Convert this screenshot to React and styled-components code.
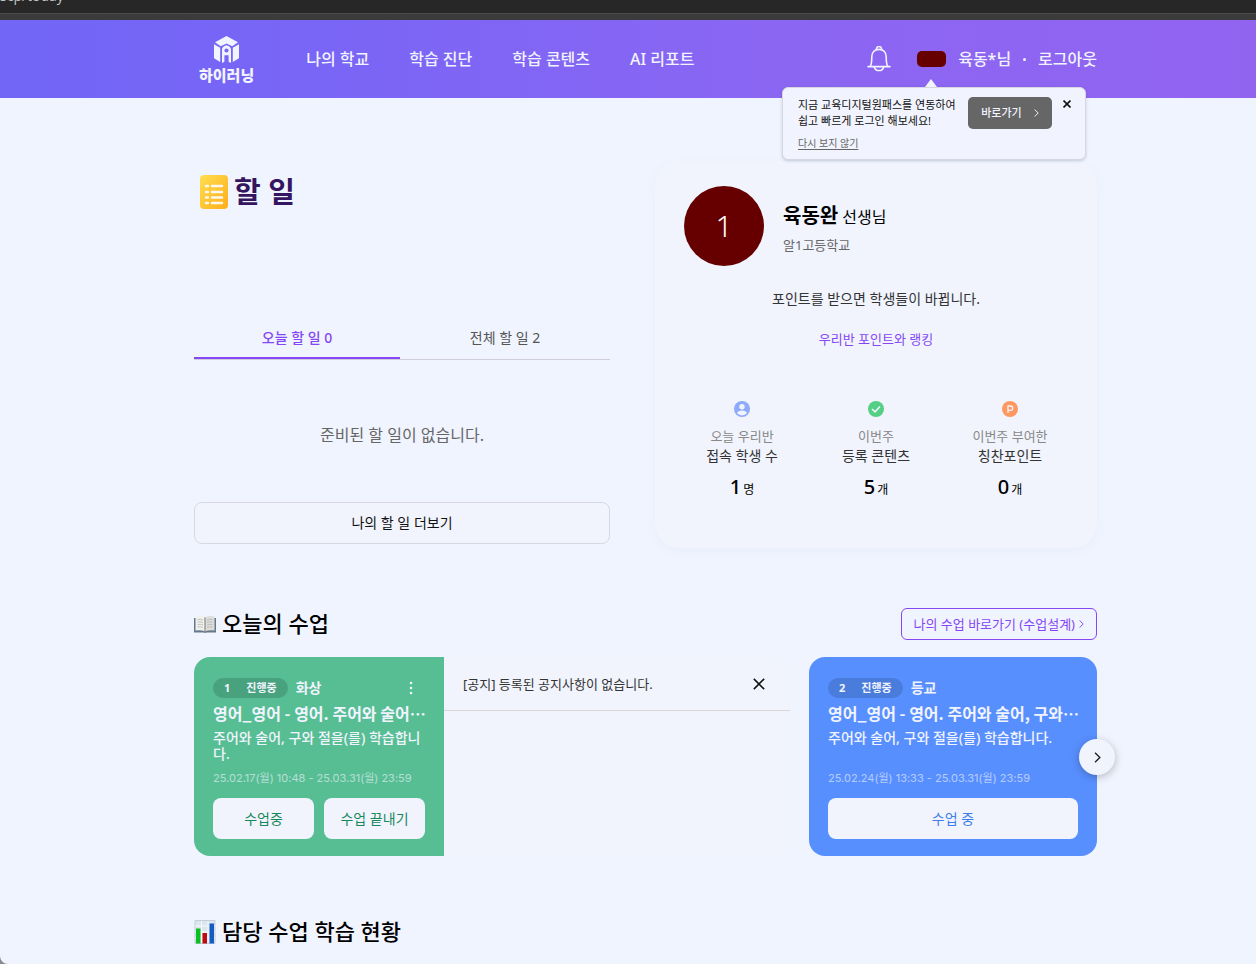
import React from "react";
import styled, { createGlobalStyle } from "styled-components";

const GlobalStyle = createGlobalStyle`
  * {
    box-sizing: border-box;
  }
  body {
    margin: 0;
    background-color: #8a8a8e;
    color: #111;
    font-family: "Noto Sans", "Noto Sans CJK KR", sans-serif;
    font-size: 14px;
    line-height: 20px;
  }
  h1, h2, h3, p, ul {
    margin: 0;
    padding: 0;
  }
  ul {
    list-style: none;
  }
  a {
    color: inherit;
    text-decoration: none;
  }
  button {
    padding: 0;
    border: 0;
    background: none;
    color: inherit;
    font: inherit;
    cursor: pointer;
  }
  svg {
    display: block;
    flex-shrink: 0;
  }
`;

const Page = styled.div`
  min-height: 100vh;
  overflow: hidden;
  border-bottom-left-radius: 8px;
  background-color: #f0f4fe;
`;

const AddressBar = styled.div`
  height: 20px;
  overflow: hidden;
  background: linear-gradient(#272727 13px, #4a4a4a 13px, #4a4a4a 14px, #3b3b3b 14px);
  color: #c4c4c4;
  > p {
    margin-top: -14px;
    font-family: "Open Sans", sans-serif;
    font-size: 14px;
  }
`;

const Header = styled.header`
  padding: 0 159px 0 194px;
  background: linear-gradient(90deg, #7166f6, #7965f6 25%, #8a66f3 60%, #9164f0);
`;

const HeaderInner = styled.div`
  position: relative;
  display: flex;
  align-items: center;
  height: 78px;
  padding-left: 5px;
  color: #f1f4fe;
  font-size: 16px;
  font-weight: 500;
`;

const Logo = styled.a`
  display: flex;
  flex-direction: column;
  align-items: center;
  gap: 3px;
  padding-top: 2px;
  font-size: 15px;
  font-weight: 900;
  line-height: 18px;
`;

const Nav = styled.nav`
  display: flex;
  gap: 40px;
  margin-left: 52px;
`;

const UserMenu = styled.div`
  display: flex;
  align-items: center;
  margin-left: auto;
`;

const UserChip = styled.span`
  width: 29px;
  height: 16px;
  margin: 0 12px 0 26px;
  border-radius: 5px;
  background-color: #660000;
`;

const Dot = styled.span`
  width: 3px;
  height: 3px;
  margin: 0 12px;
  border-radius: 50%;
  background-color: #f1f4fe;
`;

const Popup = styled.div`
  position: absolute;
  top: 67px;
  right: 11px;
  z-index: 2;
  display: flex;
  align-items: flex-start;
  width: 304px;
  padding: 9px 14px 8px 15px;
  border: 1px solid #d8d6de;
  border-radius: 6px;
  background-color: #f1f4fe;
  box-shadow: 0 1px 3px rgba(60, 80, 120, 0.25);
  color: #111;
  font-size: 11px;
  font-weight: 400;
  line-height: 16px;
  &::before {
    content: "";
    position: absolute;
    top: -9px;
    left: 142px;
    border: 6px solid transparent;
    border-top: 0;
    border-bottom: 8px solid #f1f4fe;
  }
`;

const PopupText = styled.div`
  flex: 1;
  white-space: nowrap;
  > button {
    margin-top: 6px;
    color: #666;
    font-size: 10px;
    text-decoration: underline;
    text-underline-offset: 2px;
  }
`;

const GoBtn = styled.button`
  display: flex;
  justify-content: center;
  align-items: center;
  gap: 12px;
  width: 84px;
  height: 32px;
  border-radius: 5px;
  background-color: #666;
  color: #f1f4fe;
  font-weight: 500;
`;

const PopupClose = styled.button`
  margin: 3px 0 0 11px;
`;

const Main = styled.main`
  padding: 63px 159px 16px 194px;
`;

const Top = styled.div`
  display: grid;
  grid-template-columns: 416fr 442fr;
  gap: 45px;
`;

const Todo = styled.section`
  display: flex;
  flex-direction: column;
  padding: 11px 0 4px;
`;

const TodoTitle = styled.h1`
  display: flex;
  align-items: center;
  gap: 6px;
  padding-left: 5px;
  color: #34155f;
  font-size: 29px;
  font-weight: 700;
  line-height: 40px;
`;

const Tabs = styled.div`
  display: grid;
  grid-template-columns: 206fr 210fr;
  margin-top: 107px;
  border-bottom: 1px solid #d0cedb;
`;

const Tab = styled.button`
  height: 40px;
  border-bottom: 2px solid ${({ $active }) => ($active ? "#8547f5" : "transparent")};
  color: ${({ $active }) => ($active ? "#8547f5" : "#555")};
  font-size: 14px;
  font-weight: ${({ $active }) => ($active ? 500 : 400)};
`;

const Empty = styled.p`
  flex: 1;
  display: flex;
  justify-content: center;
  align-items: center;
  padding-top: 8px;
  color: #666;
  font-size: 16px;
`;

const MoreBtn = styled.button`
  height: 42px;
  border: 1px solid #d8d8e2;
  border-radius: 8px;
  background-color: #f1f4fd;
`;

const Profile = styled.section`
  padding: 25px 20px 45px;
  border-radius: 24px;
  background-color: #f1f4fd;
  box-shadow: 0 4px 12px rgba(90, 110, 200, 0.04);
  text-align: center;
`;

const Teacher = styled.div`
  display: flex;
  align-items: center;
  gap: 19px;
  padding-left: 9px;
  text-align: left;
`;

const Avatar = styled.div`
  width: 80px;
  height: 80px;
  border-radius: 50%;
  background-color: #660000;
  color: #fff;
  font-size: 30px;
  font-weight: 300;
  line-height: 80px;
  text-align: center;
`;

const Name = styled.p`
  padding-top: 2px;
  color: #000;
  font-size: 16px;
  line-height: 32px;
  > strong {
    margin-right: 4px;
    font-size: 20px;
  }
`;

const School = styled.p`
  margin-top: 2px;
  color: #666;
  font-size: 13px;
`;

const Message = styled.p`
  margin-top: 23px;
  color: #333;
`;

const RankLink = styled.a`
  display: inline-block;
  margin-top: 20px;
  color: #8547f5;
  font-size: 13px;
`;

const Stats = styled.ul`
  display: grid;
  grid-template-columns: repeat(3, 1fr);
  margin-top: 52px;
`;

const Stat = styled.li`
  display: flex;
  flex-direction: column;
  align-items: center;
  color: #333;
  > span {
    margin-top: 9px;
    color: #888;
    font-size: 13px;
  }
  > p {
    margin-top: 8px;
    color: #000;
    font-size: 12px;
    line-height: 26px;
  }
  > p > strong {
    margin-right: 2px;
    font-size: 20px;
    font-weight: 500;
  }
`;

const SectionHead = styled.div`
  display: flex;
  justify-content: space-between;
  align-items: flex-start;
  margin-top: 60px;
  > h2 {
    display: flex;
    align-items: center;
    gap: 6px;
    color: #000;
    font-size: 22px;
    font-weight: 500;
    line-height: 30px;
  }
  > h2 > svg {
    margin-top: 2px;
  }
`;

const PlanLink = styled.a`
  display: flex;
  align-items: center;
  gap: 4px;
  height: 32px;
  padding: 0 12px;
  border: 1px solid #8547f5;
  border-radius: 6px;
  color: #8547f5;
  font-size: 13px;
`;

const Lessons = styled.div`
  position: relative;
  display: grid;
  grid-template-columns: 596fr 288fr;
  gap: 19px;
  margin-top: 17px;
`;

const LessonGroup = styled.div`
  display: grid;
  grid-template-columns: 250fr 346fr;
  border-radius: 16px;
  overflow: hidden;
  background-color: #f1f4fd;
`;

const Card = styled.article`
  min-width: 0;
  padding: 19px 19px 17px;
  border-radius: ${({ $joined }) => ($joined ? "0" : "16px")};
  background-color: ${({ $color }) => $color};
  color: #f1f4fe;
  > h3 {
    margin-top: 1px;
    font-family: "Noto Sans CJK KR", sans-serif;
    font-size: 16px;
    font-weight: 700;
    line-height: 24px;
    white-space: nowrap;
  }
`;

const CardHead = styled.div`
  display: flex;
  align-items: center;
  gap: 8px;
  height: 24px;
  font-weight: 700;
  > button {
    margin-left: auto;
    padding: 0 12px;
  }
`;

const Badge = styled.span`
  display: flex;
  gap: 16px;
  padding: 0 11px;
  border-radius: 10px;
  background-color: ${({ $color }) => $color};
  font-size: 11px;
`;

const Desc = styled.p`
  min-height: 32px;
  margin-top: 5px;
  font-weight: 500;
  line-height: 16px;
  word-break: break-all;
`;

const Period = styled.p`
  margin-top: 8px;
  font-family: Inter, "Noto Sans CJK KR", sans-serif;
  font-size: 11px;
  line-height: 16px;
  opacity: 0.6;
`;

const CardBtns = styled.div`
  display: flex;
  gap: 10px;
  margin-top: 12px;
  > button {
    flex: 1;
    height: 41px;
    border-radius: 8px;
    background-color: #f1f4fd;
    color: ${({ $color }) => $color};
  }
`;

const Notice = styled.div`
  display: flex;
  justify-content: space-between;
  align-items: center;
  height: 54px;
  padding: 0 25px 0 19px;
  border-bottom: 1px solid #dcd5dc;
  color: #333;
  font-size: 13px;
`;

const NextBtn = styled.button`
  position: absolute;
  top: 82px;
  right: -18px;
  display: flex;
  justify-content: center;
  align-items: center;
  width: 36px;
  height: 36px;
  border-radius: 50%;
  background-color: #f1f4fd;
  box-shadow: 0 2px 8px rgba(0, 0, 0, 0.25);
`;

const LogoMark = () => (
  <svg width="25" height="27" viewBox="0 0 25 27" fill="#f1f4fe">
    <path d="M12.5 0 24 6.3 18.2 10.3 12.5 7.6 6.8 10.3 1 6.3Z" />
    <path d="M0 8.2 6.2 11.8V26L0 22.3ZM25 8.2 18.8 11.8V26L25 22.3Z" />
    <path
      fillRule="evenodd"
      d="M8 27V13.2Q8.4 10.4 12.5 9.2Q16.6 10.4 17 13.2V27L14.6 25.8V19.2H10.4V25.8ZM12.5 12.4A2.1 2.1 0 1 0 12.5 16.6 2.1 2.1 0 1 0 12.5 12.4Z"
    />
  </svg>
);

const BellIcon = () => (
  <svg width="24" height="26" viewBox="0 0 24 26" fill="none" stroke="#f1f4fe" strokeWidth="1.6">
    <path d="M9.6 3.6A2.5 2.5 0 1 1 14.4 3.6" />
    <path d="M1 20.6H23" strokeLinecap="round" />
    <path d="M3.3 20.4Q4.8 18 4.8 10.8C4.8 6.2 7.8 3.4 12 3.4S19.2 6.2 19.2 10.8Q19.2 18 20.7 20.4" />
    <path d="M7.4 20.8C8.2 25.8 15.8 25.8 16.6 20.8" />
  </svg>
);

const Chevron = ({ width = 5, height = 8, color = "currentColor", stroke = 1 }) => (
  <svg width={width} height={height} viewBox="0 0 5 8" fill="none" stroke={color} strokeWidth={stroke}>
    <path d="M.7.5 4.2 4 .7 7.5" />
  </svg>
);

const Cross = ({ size, stroke }) => (
  <svg width={size} height={size} viewBox="0 0 10 10" fill="none" stroke="#111" strokeWidth={stroke}>
    <path d="M.7.7 9.3 9.3M9.3.7.7 9.3" />
  </svg>
);

const NoteIcon = () => (
  <svg width="29" height="36" viewBox="0 0 29 36">
    <defs>
      <linearGradient id="note" x1="0" y1="0" x2="1" y2="1">
        <stop offset="0" stopColor="#ffde50" />
        <stop offset="1" stopColor="#ffae18" />
      </linearGradient>
    </defs>
    <rect x="1" y="1" width="28" height="34" rx="4" fill="url(#note)" />
    <path
      d="M7 12H9M13 12H23M7 18H9M13 18H23M7 23.5H9M13 23.5H23M7 29H9M13 29H23"
      stroke="#fdf8ee"
      strokeWidth="2.4"
      strokeLinecap="round"
    />
  </svg>
);

const BookIcon = () => (
  <svg width="22" height="18" viewBox="0 0 22 18">
    <path d="M0 3H22V17.5H12.5L11 18 9.5 17.5H0Z" fill="#66798c" />
    <path d="M1.5 1.5Q7 .3 11 2.4V16.5Q7 14.6 1.5 15.6Z" fill="#f0f0ec" />
    <path d="M20.5 1.5Q15 .3 11 2.4V16.5Q15 14.6 20.5 15.6Z" fill="#dddeda" />
    <path
      d="M3.5 4.5Q6.5 4 9 5M3.5 7Q6.5 6.5 9 7.5M3.5 9.5Q6.5 9 9 10M3.5 12Q6.5 11.5 9 12.5M18.5 4.5Q15.5 4 13 5M18.5 7Q15.5 6.5 13 7.5M18.5 9.5Q15.5 9 13 10M18.5 12Q15.5 11.5 13 12.5"
      fill="none"
      stroke="#b4b4b4"
      strokeWidth=".8"
    />
    <path d="M11 2.4V17" stroke="#777" />
  </svg>
);

const ChartIcon = () => (
  <svg width="22" height="24" viewBox="0 0 22 24">
    <path d="M1 .5H21V23.5H1Z" fill="#dce6ef" stroke="#c3cedb" />
    <path d="M1 6H21M1 12H21M1 18H21M7.5 1V23M14 1V23" stroke="#f4f8fb" />
    <path d="M2 8.5H6.5V23.5H2Z" fill="#0cc022" />
    <path d="M8.5 13H13V23.5H8.5Z" fill="#c00812" />
    <path d="M15.5 3.5H20V23.5H15.5Z" fill="#125cc4" />
  </svg>
);

const StatIcon = ({ type }) => (
  <svg width="16" height="16" viewBox="0 0 16 16">
    {type === "student" && (
      <>
        <circle cx="8" cy="8" r="8" fill="#8eaafa" />
        <circle cx="8" cy="5.8" r="2.7" fill="#f1f4fe" />
        <path d="M3 12.3Q4 9.6 8 9.6T13 12.3Q11 14.4 8 14.4T3 12.3Z" fill="#f1f4fe" />
      </>
    )}
    {type === "content" && (
      <>
        <circle cx="8" cy="8" r="8" fill="#55cf86" />
        <path d="M4 8 7 10.8 12 5.5" fill="none" stroke="#f1f4fe" strokeWidth="1.6" />
      </>
    )}
    {type === "point" && (
      <>
        <circle cx="8" cy="8" r="8" fill="#ff9860" />
        <path
          d="M6 12V5H8.6A2 2 0 0 1 8.6 9.3H6"
          fill="none"
          stroke="#f1f4fe"
          strokeWidth="1.3"
        />
      </>
    )}
  </svg>
);

const MoreIcon = () => (
  <svg width="4" height="14" viewBox="0 0 4 14" fill="#f1f4fe">
    <circle cx="2" cy="2" r="1.3" />
    <circle cx="2" cy="7" r="1.3" />
    <circle cx="2" cy="12" r="1.3" />
  </svg>
);

const menus = ["나의 학교", "학습 진단", "학습 콘텐츠", "AI 리포트"];

const stats = [
  { type: "student", label: "오늘 우리반", title: "접속 학생 수", count: 1, unit: "명" },
  { type: "content", label: "이번주", title: "등록 콘텐츠", count: 5, unit: "개" },
  { type: "point", label: "이번주 부여한", title: "칭찬포인트", count: 0, unit: "개" },
];

const lessons = [
  {
    no: 1,
    type: "화상",
    title: "영어_영어 - 영어. 주어와 술어…",
    period: "25.02.17(월) 10:48 - 25.03.31(월) 23:59",
    buttons: ["수업중", "수업 끝내기"],
    color: "#57be94",
    badge: "#48a27e",
    text: "#16895a",
  },
  {
    no: 2,
    type: "등교",
    title: "영어_영어 - 영어. 주어와 술어, 구와…",
    period: "25.02.24(월) 13:33 - 25.03.31(월) 23:59",
    buttons: ["수업 중"],
    color: "#588fff",
    badge: "#4a7cdc",
    text: "#3f7ee8",
  },
];

const LessonCard = ({ lesson, joined }) => (
  <Card $color={lesson.color} $joined={joined}>
    <CardHead>
      <Badge $color={lesson.badge}>
        <span>{lesson.no}</span>
        <span>진행중</span>
      </Badge>
      {lesson.type}
      {joined && (
        <button aria-label="더보기">
          <MoreIcon />
        </button>
      )}
    </CardHead>
    <h3>{lesson.title}</h3>
    <Desc>주어와 술어, 구와 절을(를) 학습합니다.</Desc>
    <Period>{lesson.period}</Period>
    <CardBtns $color={lesson.text}>
      {lesson.buttons.map((text) => (
        <button key={text}>{text}</button>
      ))}
    </CardBtns>
  </Card>
);

export const App = () => {
  return (
    <>
      <GlobalStyle />
      <Page>
        <AddressBar>
          <p>scp/today</p>
        </AddressBar>
        <Header>
          <HeaderInner>
            <Logo href="#">
              <LogoMark />
              하이러닝
            </Logo>
            <Nav>
              {menus.map((menu) => (
                <a href="#" key={menu}>
                  {menu}
                </a>
              ))}
            </Nav>
            <UserMenu>
              <button aria-label="알림">
                <BellIcon />
              </button>
              <UserChip />
              <a href="#">육동*님</a>
              <Dot />
              <button>로그아웃</button>
            </UserMenu>
            <Popup>
              <PopupText>
                <p>
                  지금 교육디지털원패스를 연동하여
                  <br />
                  쉽고 빠르게 로그인 해보세요!
                </p>
                <button>다시 보지 않기</button>
              </PopupText>
              <GoBtn>
                바로가기
                <Chevron />
              </GoBtn>
              <PopupClose aria-label="닫기">
                <Cross size={8} stroke={2} />
              </PopupClose>
            </Popup>
          </HeaderInner>
        </Header>

        <Main>
          <Top>
            <Todo>
              <TodoTitle>
                <NoteIcon />할 일
              </TodoTitle>
              <Tabs>
                <Tab $active>오늘 할 일 0</Tab>
                <Tab>전체 할 일 2</Tab>
              </Tabs>
              <Empty>준비된 할 일이 없습니다.</Empty>
              <MoreBtn>나의 할 일 더보기</MoreBtn>
            </Todo>

            <Profile>
              <Teacher>
                <Avatar>1</Avatar>
                <div>
                  <Name>
                    <strong>육동완</strong>선생님
                  </Name>
                  <School>알1고등학교</School>
                </div>
              </Teacher>
              <Message>포인트를 받으면 학생들이 바뀝니다.</Message>
              <RankLink href="#">우리반 포인트와 랭킹</RankLink>
              <Stats>
                {stats.map(({ type, label, title, count, unit }) => (
                  <Stat key={type}>
                    <StatIcon type={type} />
                    <span>{label}</span>
                    {title}
                    <p>
                      <strong>{count}</strong>
                      {unit}
                    </p>
                  </Stat>
                ))}
              </Stats>
            </Profile>
          </Top>

          <SectionHead>
            <h2>
              <BookIcon />
              오늘의 수업
            </h2>
            <PlanLink href="#">
              나의 수업 바로가기 (수업설계)
              <Chevron />
            </PlanLink>
          </SectionHead>
          <Lessons>
            <LessonGroup>
              <LessonCard lesson={lessons[0]} joined />
              <div>
                <Notice>
                  [공지] 등록된 공지사항이 없습니다.
                  <button aria-label="공지 닫기">
                    <Cross size={12} stroke={1.3} />
                  </button>
                </Notice>
              </div>
            </LessonGroup>
            <LessonCard lesson={lessons[1]} />
            <NextBtn aria-label="다음 수업">
              <Chevron width={7} height={11} color="#222" />
            </NextBtn>
          </Lessons>

          <SectionHead>
            <h2>
              <ChartIcon />
              담당 수업 학습 현황
            </h2>
          </SectionHead>
        </Main>
      </Page>
    </>
  );
};

export default App;
